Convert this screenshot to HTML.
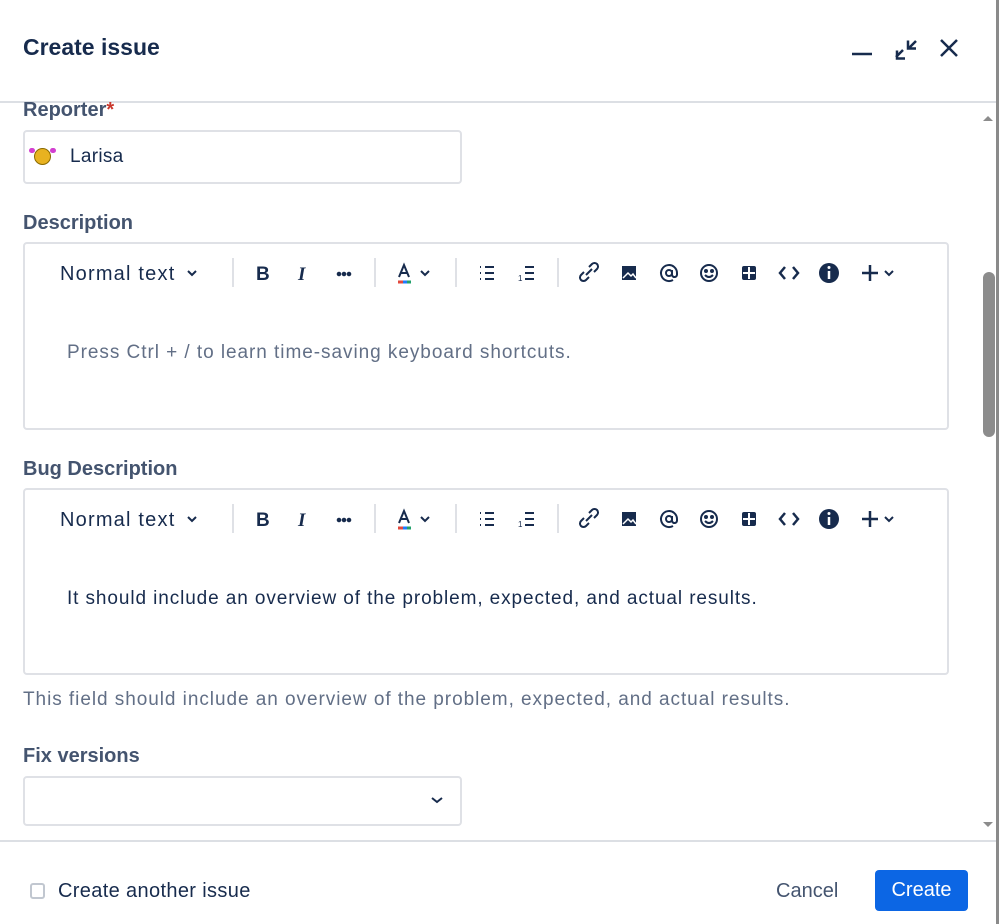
<!DOCTYPE html>
<html><head><meta charset="utf-8"><style>
*{box-sizing:border-box;margin:0;padding:0}
body{width:999px;height:924px;background:#fff;font-family:"Liberation Sans",sans-serif;color:#172b4d;position:relative;overflow:hidden}
.abs{position:absolute}
.title{left:23px;top:34px;font-size:23px;font-weight:bold;color:#172b4d}
.lbl{left:23px;font-size:20px;color:#44546f;font-weight:bold}
.box{border:2px solid #dfe1e6;border-radius:4px;left:23px}
.ph{font-size:19px;color:#626f86;letter-spacing:0.95px}
.nt{left:60px;top:10px;font-size:20px;color:#172b4d;letter-spacing:1.2px}
</style></head><body>
<div class="abs title">Create issue</div>
<svg class="abs" style="left:840px;top:30px" width="130" height="40" viewBox="0 0 130 40">
<path d="M12 24H32" stroke="#172b4d" stroke-width="2.5"/>
<path d="M56 27L63 20M57 20.5V28.5H65M76 11L69 18M68 10.5V18.5H76" stroke="#172b4d" stroke-width="2.5" fill="none"/>
<path d="M101 10L117 26M117 10L101 26" stroke="#172b4d" stroke-width="2.5"/>
</svg>
<div class="abs" style="left:0;top:101px;width:996px;height:2px;background:#dcdfe4"></div>
<div class="abs lbl" style="top:99px">Reporter<span style="color:#c9372c">*</span></div>
<div class="abs box" style="top:130px;width:439px;height:54px"></div>
<div class="abs" style="left:31px;top:146px;width:22px;height:22px">
<div class="abs" style="left:3px;top:2px;width:17px;height:17px;border-radius:50%;background:#e8b220;border:1px solid #8a6a00"></div>
<div class="abs" style="left:-2px;top:2px;width:6px;height:5px;background:#d23fd0;border-radius:3px"></div>
<div class="abs" style="left:19px;top:2px;width:6px;height:5px;background:#d23fd0;border-radius:3px"></div>
</div>
<div class="abs" style="left:70px;top:146px;font-size:19px;color:#172b4d;letter-spacing:0.3px">Larisa</div>
<div class="abs lbl" style="top:212px">Description</div>
<div class="abs box" style="top:242px;width:926px;height:188px"></div>
<div class="abs ph" style="left:67px;top:342px">Press Ctrl + / to learn time-saving keyboard shortcuts.</div>
<div class="abs lbl" style="top:458px">Bug Description</div>
<div class="abs box" style="top:488px;width:926px;height:187px"></div>
<div class="abs" style="left:67px;top:588px;font-size:19px;color:#172b4d;letter-spacing:0.9px">It should include an overview of the problem, expected, and actual results.</div>
<div class="abs ph" style="left:23px;top:689px">This field should include an overview of the problem, expected, and actual results.</div>
<div class="abs lbl" style="top:745px">Fix versions</div>
<div class="abs box" style="top:776px;width:439px;height:50px"></div>
<svg class="abs" style="left:430px;top:795px" width="14" height="10"><path d="M2 3L7 7L12 3" stroke="#172b4d" stroke-width="2" fill="none"/></svg>

<div class="abs" style="left:0;top:253px;width:999px;height:40px">
<div class="abs nt">Normal text</div>
<svg class="abs" style="left:0;top:0" width="920" height="40" viewBox="0 0 920 40" fill="none" stroke="#172b4d" stroke-width="2">
<path d="M188 18L192 22L196 18"/>
<path d="M233 5V34M375 5V34M456 5V34M558 5V34" stroke="#dfe1e6"/>
<text x="256" y="27" font-size="19" font-weight="bold" fill="#172b4d" stroke="none" font-family="Liberation Sans">B</text>
<text x="298" y="27" font-size="19" font-style="italic" font-weight="bold" fill="#172b4d" stroke="none" font-family="Liberation Serif">I</text>
<circle cx="339" cy="21" r="1.3" fill="#172b4d"/><circle cx="344" cy="21" r="1.3" fill="#172b4d"/><circle cx="349" cy="21" r="1.3" fill="#172b4d"/>
<path d="M399 24L404 12L409 24M401 20H407"/>
<path d="M398 29H403" stroke="#e2483d" stroke-width="3"/><path d="M403 29H407" stroke="#1d7afc" stroke-width="3"/><path d="M407 29H411" stroke="#22a06b" stroke-width="3"/>
<path d="M421 18L425 22L429 18"/>
<path d="M485 14H494M485 20H494M485 26H494M480 14H481M480 20H481M480 26H481"/>
<path d="M525 14H534M525 20H534M525 26H534" /><text x="518" y="28" font-size="8" fill="#172b4d" stroke="none">1</text>
<path d="M586 22L592 16M584 19L581 22A3 3 0 0 0 586 27L589 24M594 19L597 16A3 3 0 0 0 592 11L589 14"/>
<rect x="622" y="13" width="14" height="14" fill="#172b4d" stroke="none"/><path d="M623 25L628 20L631 23L633 21L636 25" stroke="#fff" stroke-width="1.5"/>
<circle cx="669" cy="20" r="3"/><path d="M672 17V22A2 2 0 0 0 677 21V20A8 8 0 1 0 673 27"/>
<circle cx="709" cy="20" r="8"/><circle cx="706" cy="18" r="1" fill="#172b4d"/><circle cx="712" cy="18" r="1" fill="#172b4d"/><path d="M705 22Q709 26 713 22"/>
<rect x="742" y="13" width="14" height="14" rx="2" fill="#172b4d" stroke="none"/><path d="M749 14V26M743 20H755" stroke="#fff"/>
<path d="M785 14L780 20L785 26M793 14L798 20L793 26" stroke-width="2.5"/>
<circle cx="829" cy="20" r="10" fill="#172b4d" stroke="none"/><path d="M829 18V26" stroke="#fff" stroke-width="2.5"/><circle cx="829" cy="14.5" r="1.5" fill="#fff" stroke="none"/>
<path d="M870 12V28M862 20H878" stroke-width="2.5"/><path d="M885 18L889 22L893 18"/>
</svg></div>
<div class="abs" style="left:0;top:499px;width:999px;height:40px">
<div class="abs nt">Normal text</div>
<svg class="abs" style="left:0;top:0" width="920" height="40" viewBox="0 0 920 40" fill="none" stroke="#172b4d" stroke-width="2">
<path d="M188 18L192 22L196 18"/>
<path d="M233 5V34M375 5V34M456 5V34M558 5V34" stroke="#dfe1e6"/>
<text x="256" y="27" font-size="19" font-weight="bold" fill="#172b4d" stroke="none" font-family="Liberation Sans">B</text>
<text x="298" y="27" font-size="19" font-style="italic" font-weight="bold" fill="#172b4d" stroke="none" font-family="Liberation Serif">I</text>
<circle cx="339" cy="21" r="1.3" fill="#172b4d"/><circle cx="344" cy="21" r="1.3" fill="#172b4d"/><circle cx="349" cy="21" r="1.3" fill="#172b4d"/>
<path d="M399 24L404 12L409 24M401 20H407"/>
<path d="M398 29H403" stroke="#e2483d" stroke-width="3"/><path d="M403 29H407" stroke="#1d7afc" stroke-width="3"/><path d="M407 29H411" stroke="#22a06b" stroke-width="3"/>
<path d="M421 18L425 22L429 18"/>
<path d="M485 14H494M485 20H494M485 26H494M480 14H481M480 20H481M480 26H481"/>
<path d="M525 14H534M525 20H534M525 26H534" /><text x="518" y="28" font-size="8" fill="#172b4d" stroke="none">1</text>
<path d="M586 22L592 16M584 19L581 22A3 3 0 0 0 586 27L589 24M594 19L597 16A3 3 0 0 0 592 11L589 14"/>
<rect x="622" y="13" width="14" height="14" fill="#172b4d" stroke="none"/><path d="M623 25L628 20L631 23L633 21L636 25" stroke="#fff" stroke-width="1.5"/>
<circle cx="669" cy="20" r="3"/><path d="M672 17V22A2 2 0 0 0 677 21V20A8 8 0 1 0 673 27"/>
<circle cx="709" cy="20" r="8"/><circle cx="706" cy="18" r="1" fill="#172b4d"/><circle cx="712" cy="18" r="1" fill="#172b4d"/><path d="M705 22Q709 26 713 22"/>
<rect x="742" y="13" width="14" height="14" rx="2" fill="#172b4d" stroke="none"/><path d="M749 14V26M743 20H755" stroke="#fff"/>
<path d="M785 14L780 20L785 26M793 14L798 20L793 26" stroke-width="2.5"/>
<circle cx="829" cy="20" r="10" fill="#172b4d" stroke="none"/><path d="M829 18V26" stroke="#fff" stroke-width="2.5"/><circle cx="829" cy="14.5" r="1.5" fill="#fff" stroke="none"/>
<path d="M870 12V28M862 20H878" stroke-width="2.5"/><path d="M885 18L889 22L893 18"/>
</svg></div>

<div class="abs" style="left:996px;top:0;width:3px;height:924px;background:#8a8a8a"></div>
<svg class="abs" style="left:980px;top:112px" width="16" height="12"><path d="M3 9L8 4L13 9Z" fill="#8c8c8c"/></svg>
<svg class="abs" style="left:980px;top:818px" width="16" height="12"><path d="M3 4L8 9L13 4Z" fill="#8c8c8c"/></svg>
<div class="abs" style="left:983px;top:272px;width:12px;height:165px;border-radius:6px;background:#8c8c8c"></div>

<div class="abs" style="left:0;top:840px;width:996px;height:2px;background:#dcdfe4"></div>
<div class="abs" style="left:30px;top:883px;width:15px;height:16px;border:2px solid #c1c7d0;border-radius:3px"></div>
<div class="abs" style="left:58px;top:880px;font-size:20px;color:#172b4d;letter-spacing:0.35px">Create another issue</div>
<div class="abs" style="left:776px;top:880px;font-size:20px;color:#44546f">Cancel</div>
<div class="abs" style="left:875px;top:870px;width:93px;height:41px;background:#0c66e4;border-radius:4px;color:#fff;font-size:20px;text-align:center;line-height:41px">Create</div>
</body></html>
